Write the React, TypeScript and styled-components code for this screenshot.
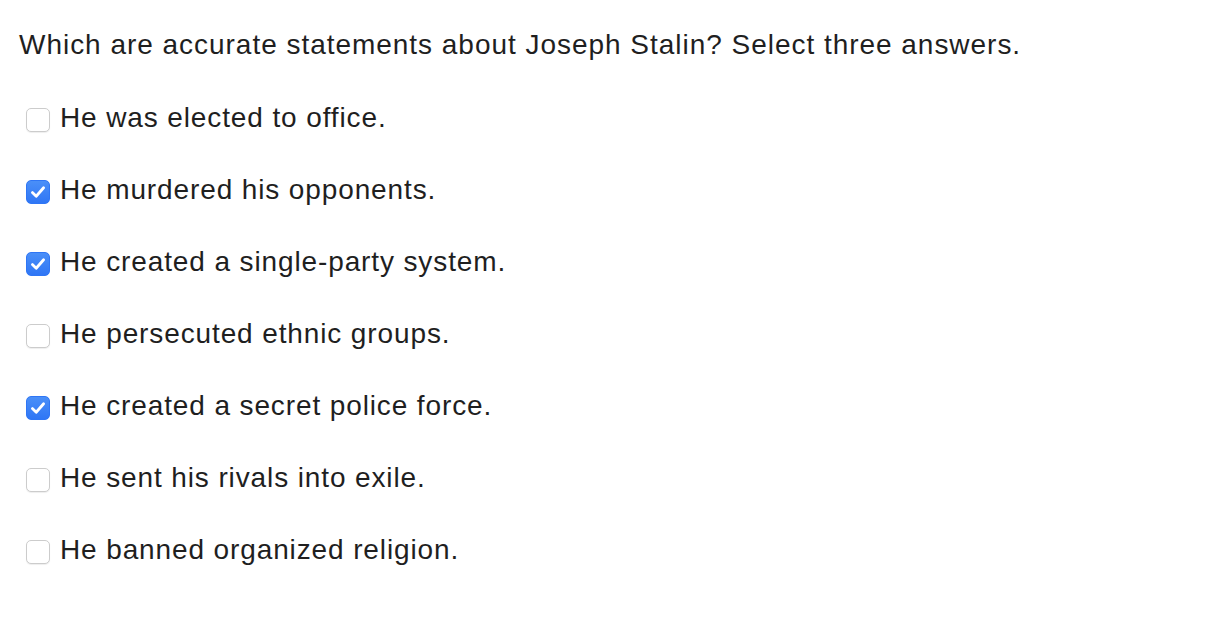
import React from "react";
import styled, { createGlobalStyle } from "styled-components";

const Global = createGlobalStyle`
  html, body { margin: 0; padding: 0; background: #ffffff; }
  body { font-family: "Liberation Sans", Arial, Helvetica, sans-serif; color: #1f1f1f; }
`;

const Page = styled.div`
  padding: 25px 0 0 19px;
`;

const Question = styled.p`
  margin: 0 0 33px 0;
  font-size: 28px;
  line-height: 40px;
  letter-spacing: 0.97px;
`;

const List = styled.div`
  display: flex;
  flex-direction: column;
  gap: 32px;
`;

const Row = styled.label`
  display: flex;
  align-items: center;
  gap: 10px;
  padding-left: 7px;
  font-size: 28px;
  line-height: 40px;
  letter-spacing: 0.88px;
  cursor: pointer;
`;

const Box = styled.span<{ $checked: boolean }>`
  flex: none;
  width: 24px;
  height: 24px;
  margin-top: 4px;
  box-sizing: border-box;
  border-radius: 5px;
  display: flex;
  align-items: center;
  justify-content: center;
  background: ${(p) => (p.$checked ? "linear-gradient(#4a8ff8, #2f76f5)" : "#ffffff")};
  border: 1px solid ${(p) => (p.$checked ? "#2f76f5" : "#cccccc")};
  box-shadow: ${(p) => (p.$checked ? "none" : "0 1px 1px rgba(0,0,0,0.07)")};
`;

const items = [
  { text: "He was elected to office.", checked: false },
  { text: "He murdered his opponents.", checked: true },
  { text: "He created a single-party system.", checked: true },
  { text: "He persecuted ethnic groups.", checked: false },
  { text: "He created a secret police force.", checked: true },
  { text: "He sent his rivals into exile.", checked: false },
  { text: "He banned organized religion.", checked: false },
];

const Check = () => (
  <svg width="18" height="18" viewBox="0 0 18 18" fill="none">
    <path d="M3.4 9.6 L7.2 13.2 L14.6 4.8" stroke="#ffffff" strokeWidth="2.8" strokeLinecap="round" strokeLinejoin="round" />
  </svg>
);

export default function App() {
  return (
    <Page>
      <Global />
      <Question>Which are accurate statements about Joseph Stalin? Select three answers.</Question>
      <List>
        {items.map((it) => (
          <Row key={it.text}>
            <Box $checked={it.checked}>{it.checked && <Check />}</Box>
            <span>{it.text}</span>
          </Row>
        ))}
      </List>
    </Page>
  );
}
